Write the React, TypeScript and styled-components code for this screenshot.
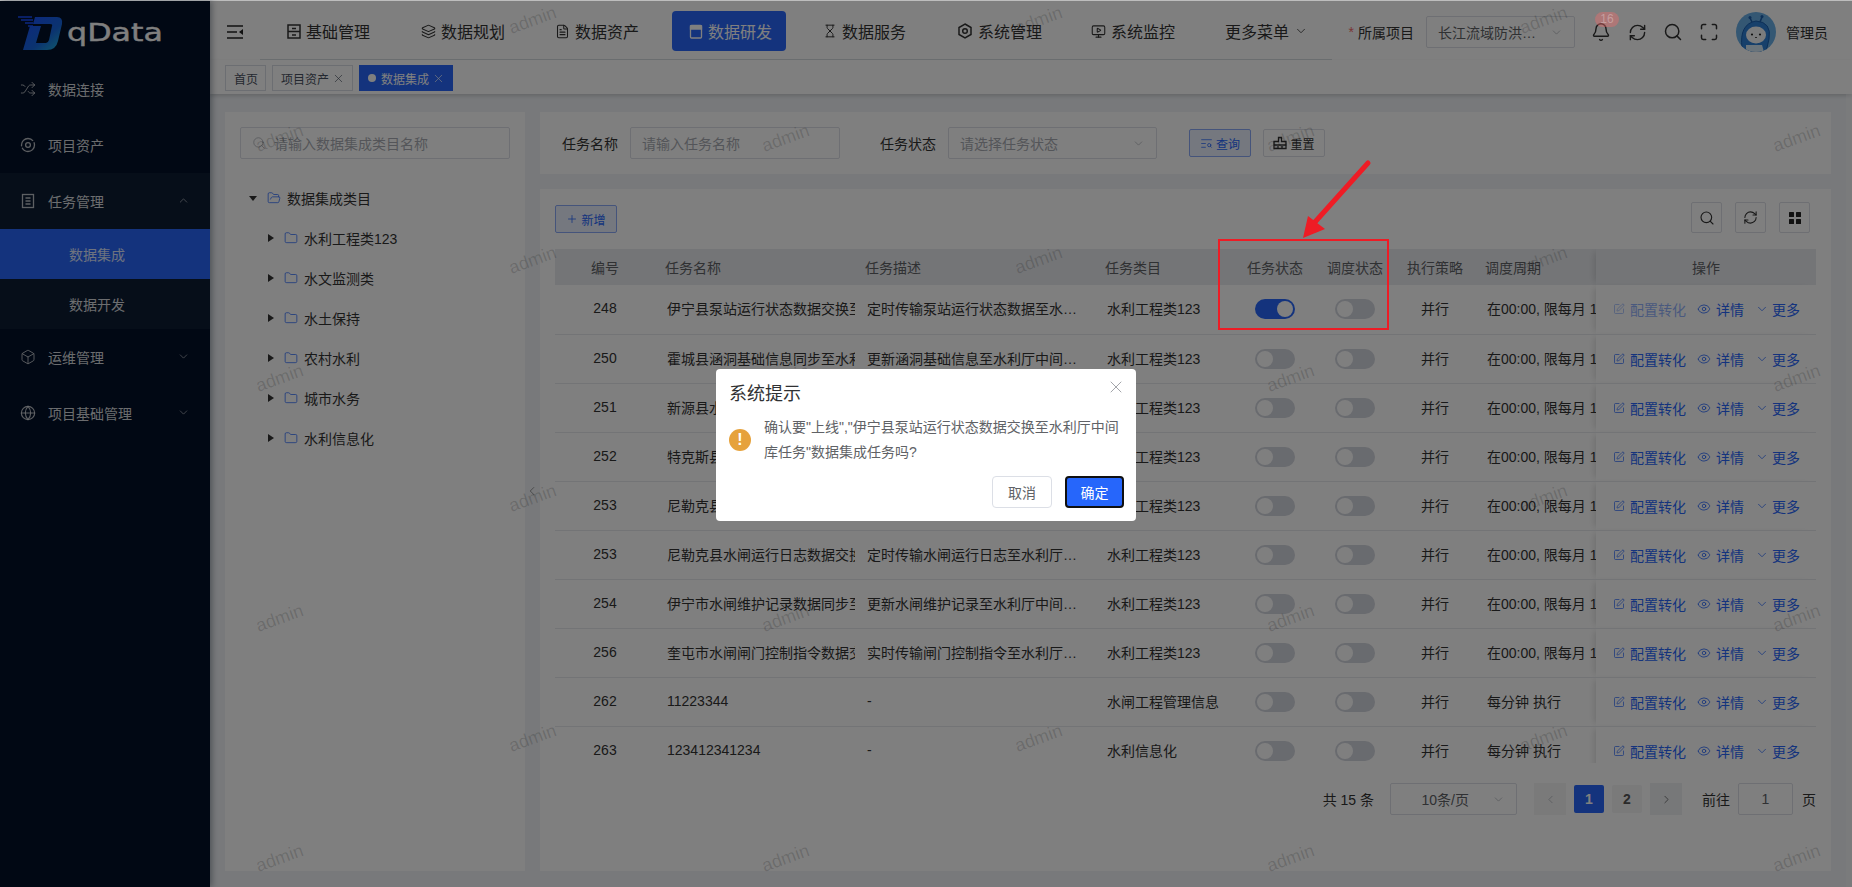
import { FC, ReactNode } from 'react';
import styled, { createGlobalStyle } from 'styled-components';
import {
  Bell,
  Box,
  ChevronDown,
  ChevronLeft,
  ChevronRight,
  ChevronUp,
  Eye,
  FileText,
  Folder,
  FolderOpen,
  Globe,
  Hourglass,
  Layers,
  Maximize,
  MonitorPlay,
  Plus,
  RefreshCw,
  Search,
  Shuffle,
  SquarePen,
  TextSearch,
  X,
} from 'lucide-react';

const BLUE = '#2867fb';

const GlobalStyle = createGlobalStyle`
  html, body {
    margin: 0;
    height: 100%;
    overflow: hidden;
    font-family: "Liberation Sans", "Noto Sans CJK SC", sans-serif;
    font-size: 14px;
    color: #333;
  }
  * { box-sizing: border-box; }
`;

const Shell = styled.div`
  position: relative;
  display: flex;
  height: 100vh;
  padding-top: 1px;
  background: #bdbdbd;
  overflow: hidden;
`;

/* ---------- sidebar ---------- */

const Sidebar = styled.aside`
  width: 210px;
  flex-shrink: 0;
  background: #021028;
  color: rgba(255, 255, 255, 0.85);
  box-shadow: 2px 0 6px rgba(0, 21, 41, 0.35);
  z-index: 1;
`;

const LogoRow = styled.div`
  height: 60px;
  display: flex;
  align-items: flex-start;
  padding: 14px 0 0 17px;
  gap: 4px;
`;

const LogoText = styled.span`
  display: inline-block;
  font-family: "DejaVu Sans", sans-serif;
  font-size: 25px;
  line-height: 36px;
  color: #fff;
  -webkit-text-stroke: 0.4px #fff;
  transform: scaleX(1.27);
  transform-origin: left center;
`;

const MenuItem = styled.div<{ $open?: boolean }>`
  height: 56px;
  display: flex;
  align-items: center;
  padding: 0 20px 1px 20px;
  gap: 12px;
  background: ${(p) => (p.$open ? '#0c1c33' : 'transparent')};
  svg { flex-shrink: 0; opacity: 0.85; }
  span { flex: 1; }
`;

const SubItem = styled.div<{ $active?: boolean }>`
  height: 50px;
  display: flex;
  align-items: center;
  padding: 0 0 1px 69px;
  background: ${(p) => (p.$active ? BLUE : '#0c1c33')};
`;

/* ---------- header ---------- */

const Main = styled.main`
  flex: 1;
  min-width: 0;
  display: flex;
  flex-direction: column;
  background: #f0f3f7;
`;

const Header = styled.header`
  height: 59px;
  flex-shrink: 0;
  display: flex;
  align-items: flex-start;
  padding: 0 24px 0 17px;
  background: #fff;
`;

const Collapse = styled.div`
  width: 16px;
  height: 14px;
  margin-top: 24px;
  margin-right: 17px;
  display: flex;
`;

const Nav = styled.nav`
  height: 59px;
  display: flex;
  gap: 20px;
  padding: 10px 10px 0;
  border-bottom: 1px solid #d9dfe2;
`;

const NavItem = styled.div<{ $active?: boolean }>`
  width: 114px;
  height: 40px;
  display: flex;
  align-items: center;
  padding-left: 17px;
  gap: 5px;
  font-size: 16px;
  border-radius: 4px;
  color: ${(p) => (p.$active ? '#fff' : '#333')};
  background: ${(p) => (p.$active ? BLUE : 'transparent')};
`;

const HeaderRight = styled.div`
  margin-left: auto;
  height: 59px;
  display: flex;
  align-items: center;
  padding-top: 3px;
`;

const Required = styled.span`
  color: #f56c6c;
  margin-right: 4px;
`;

const ProjectSelect = styled.div`
  width: 149px;
  height: 32px;
  margin: 0 8px 0 12px;
  padding: 0 11px;
  display: flex;
  align-items: center;
  justify-content: space-between;
  border: 1px solid #dcdfe6;
  border-radius: 2px;
  color: #606266;
`;

const HeaderIcon = styled.div`
  position: relative;
  width: 36px;
  display: flex;
  justify-content: center;
`;

const Badge = styled.span`
  position: absolute;
  top: -10px;
  left: 12px;
  width: 24px;
  height: 15px;
  border-radius: 8px;
  background: rgba(245, 108, 108, 0.4);
  color: rgba(255, 255, 255, 0.3);
  font-size: 12px;
  line-height: 15px;
  text-align: center;
  z-index: 11;
`;

const AvatarWrap = styled.div`
  width: 40px;
  height: 40px;
  margin: 0 10px 0 9px;
`;

const TagsBar = styled.div`
  height: 34px;
  flex-shrink: 0;
  display: flex;
  align-items: flex-start;
  gap: 6px;
  padding: 5px 0 0 15px;
  background: #fff;
  box-shadow: 0 2px 4px rgba(0, 0, 0, 0.16);
`;

const Tag = styled.div<{ $active?: boolean }>`
  height: 26px;
  display: flex;
  align-items: center;
  gap: 3px;
  padding: 0 7px 0 8px;
  font-size: 12px;
  border: 1px solid ${(p) => (p.$active ? BLUE : '#d8dce5')};
  background: ${(p) => (p.$active ? BLUE : '#fff')};
  color: ${(p) => (p.$active ? '#fff' : '#495060')};
`;

const Dot = styled.i`
  width: 8px;
  height: 8px;
  margin-right: 2px;
  border-radius: 50%;
  background: #fff;
`;

/* ---------- content ---------- */

const Content = styled.div`
  position: relative;
  flex: 1;
  min-height: 0;
  display: flex;
  gap: 15px;
  padding: 18px 21px 16px 15px;
  &::after {
    content: '';
    position: absolute;
    top: 0;
    right: 0;
    bottom: 0;
    width: 6px;
    background: rgba(255, 255, 255, 0.3);
  }
`;

const TreePanel = styled.section`
  position: relative;
  width: 300px;
  flex-shrink: 0;
  padding: 15px;
  background: #fff;
`;

const PanelToggle = styled.div`
  position: absolute;
  top: 372px;
  right: -14px;
  display: flex;
  color: #555;
`;

const TreeSearch = styled.div`
  height: 32px;
  display: flex;
  align-items: center;
  gap: 8px;
  padding-left: 11px;
  border: 1px solid #dcdfe6;
  border-radius: 2px;
  color: #a8abb2;
`;

const Tree = styled.div`
  margin-top: 19px;
`;

const TreeRow = styled.div<{ $level: number }>`
  height: 40px;
  display: flex;
  align-items: center;
  gap: 6px;
  padding-left: ${(p) => 9 + p.$level * 18}px;
  svg { color: ${BLUE}; flex-shrink: 0; }
`;

const Caret = styled.i<{ $open?: boolean }>`
  display: block;
  margin-right: 4px;
  border-style: solid;
  border-color: transparent;
  border-width: ${(p) => (p.$open ? '5px 4px 0' : '4px 0 4px 6px')};
  ${(p) => (p.$open ? 'border-top-color: #333;' : 'border-left-color: #333;')}
  ${(p) => (p.$open ? 'width: 8px; height: 5px;' : 'width: 6px; height: 8px; margin-left: 1px;')}
`;

const RightColumn = styled.div`
  flex: 1;
  min-width: 0;
  display: flex;
  flex-direction: column;
  gap: 15px;
`;

const QueryPanel = styled.section`
  height: 62px;
  flex-shrink: 0;
  display: flex;
  align-items: center;
  padding: 0 22px;
  background: #fff;
`;

const Label = styled.label`
  margin-right: 12px;
`;

const Field = styled.div<{ $width: number; $gap?: number }>`
  width: ${(p) => p.$width}px;
  height: 32px;
  margin-right: ${(p) => p.$gap ?? 0}px;
  display: flex;
  align-items: center;
  justify-content: space-between;
  padding: 0 11px;
  border: 1px solid #dcdfe6;
  border-radius: 2px;
  color: #a8abb2;
`;

const ActionButton = styled.button<{ $primary?: boolean; $gap?: number }>`
  height: 28px;
  width: 62px;
  margin-left: ${(p) => p.$gap ?? 0}px;
  padding: 0;
  display: flex;
  align-items: center;
  justify-content: center;
  gap: 3px;
  font: inherit;
  font-size: 12px;
  border-radius: 2px;
  border: 1px solid ${(p) => (p.$primary ? '#8aa9f7' : '#dcdfe6')};
  background: ${(p) => (p.$primary ? '#eaf0ff' : '#fff')};
  color: ${(p) => (p.$primary ? BLUE : '#333')};
`;

const TablePanel = styled.section`
  flex: 1;
  min-height: 0;
  display: flex;
  flex-direction: column;
  padding: 13px 15px 0;
  background: #fff;
`;

const Toolbar = styled.div`
  height: 31px;
  flex-shrink: 0;
  display: flex;
  align-items: flex-end;
  margin-right: 6px;
  margin-bottom: 16px;
`;

const ToolButtons = styled.div`
  margin-left: auto;
  display: flex;
  gap: 13px;
`;

const ToolButton = styled.div`
  width: 31px;
  height: 31px;
  display: flex;
  align-items: center;
  justify-content: center;
  border: 1px solid #dcdfe6;
  border-radius: 2px;
`;

const TableWrap = styled.div`
  height: 514px;
  flex-shrink: 0;
  overflow: hidden;
`;

const Table = styled.table`
  width: 1261px;
  table-layout: fixed;
  border-collapse: collapse;
`;

const Th = styled.th<{ $align?: string }>`
  height: 36px;
  padding: 0 10px;
  font-weight: 400;
  color: #606266;
  background: #e9ebef;
  white-space: nowrap;
  text-align: ${(p) => p.$align ?? 'left'};
`;

const Td = styled.td<{ $align?: string; $ellipsis?: boolean }>`
  height: 49px;
  padding: 0 10px 2px ${(p) => (p.$align ? 10 : 12)}px;
  white-space: nowrap;
  overflow: hidden;
  text-overflow: ${(p) => (p.$ellipsis ? 'ellipsis' : 'clip')};
  text-align: ${(p) => p.$align ?? 'left'};
  border-bottom: 1px solid #e6e8ec;
`;

const OpTh = styled(Th)`
  text-align: center;
  box-shadow: -5px 0 6px -3px rgba(0, 0, 0, 0.12);
`;

const OpTd = styled.td`
  padding: 0 0 0 17px;
  background: #fff;
  border-bottom: 1px solid #e6e8ec;
  box-shadow: -5px 0 6px -3px rgba(0, 0, 0, 0.12);
`;

const OpLinks = styled.div`
  display: flex;
  align-items: center;
  gap: 11px;
`;

const OpLink = styled.span<{ $muted?: boolean; $tight?: boolean }>`
  display: inline-flex;
  align-items: center;
  gap: ${(p) => (p.$tight ? 3 : 5)}px;
  color: ${BLUE};
  opacity: ${(p) => (p.$muted ? 0.5 : 1)};
`;

const Switch = styled.span<{ $on?: boolean }>`
  display: inline-flex;
  vertical-align: middle;
  justify-content: ${(p) => (p.$on ? 'flex-end' : 'flex-start')};
  width: 40px;
  height: 20px;
  margin-top: 2px;
  border-radius: 10px;
  padding: 2px;
  background: ${(p) => (p.$on ? BLUE : '#d3d6de')};
  &::after {
    content: '';
    width: 16px;
    height: 16px;
    border-radius: 50%;
    background: #fff;
  }
`;

const Pager = styled.div`
  height: 32px;
  margin-top: 20px;
  display: flex;
  align-items: center;
  justify-content: flex-end;
  color: #333;
`;

const PageSelect = styled.div`
  width: 127px;
  height: 32px;
  margin: 0 17px 0 16px;
  display: flex;
  align-items: center;
  justify-content: flex-end;
  gap: 23px;
  padding-right: 11px;
  border: 1px solid #dcdfe6;
  border-radius: 2px;
  color: #606266;
`;

const PageArrow = styled.div<{ $gap?: number; $dim?: boolean }>`
  width: 32px;
  height: 32px;
  margin-right: ${(p) => p.$gap ?? 0}px;
  display: flex;
  align-items: center;
  justify-content: center;
  background: ${(p) => (p.$dim ? '#f4f4f5' : '#eef0f3')};
  color: ${(p) => (p.$dim ? '#b0b3b8' : '#555')};
`;

const PageNum = styled.div<{ $active?: boolean }>`
  width: 30px;
  height: 28px;
  margin-right: 8px;
  display: flex;
  align-items: center;
  justify-content: center;
  border-radius: 2px;
  font-weight: 700;
  background: ${(p) => (p.$active ? BLUE : '#f4f4f5')};
  color: ${(p) => (p.$active ? '#fff' : '#555')};
`;

const GotoLabel = styled.span`
  margin-left: 20px;
`;

const GotoInput = styled.div`
  width: 55px;
  height: 32px;
  margin: 0 9px 0 8px;
  display: flex;
  align-items: center;
  justify-content: center;
  border: 1px solid #dcdfe6;
  border-radius: 2px;
  color: #606266;
`;

/* ---------- overlays ---------- */

const WatermarkLayer = styled.div`
  position: absolute;
  inset: 0;
  pointer-events: none;
  z-index: 5;
`;

const Mark = styled.span.attrs<{ $x: number; $y: number }>((p) => ({
  style: { left: p.$x - 25, top: p.$y - 11 },
}))<{ $x: number; $y: number }>`
  position: absolute;
  font-size: 18px;
  line-height: 22px;
  color: rgba(0, 0, 0, 0.16);
  transform: rotate(-20deg);
`;

const Mask = styled.div`
  position: absolute;
  inset: 1px 0 0;
  z-index: 10;
  display: flex;
  justify-content: center;
  align-items: flex-start;
  padding-top: 368px;
  background: rgba(0, 0, 0, 0.5);
`;

const Dialog = styled.div`
  position: relative;
  width: 420px;
  height: 152px;
  padding: 16px 12px 12px 13px;
  border-radius: 4px;
  background: #fff;
`;

const DialogTitle = styled.div`
  font-size: 18px;
  line-height: 18px;
  color: #303133;
`;

const DialogClose = styled.div`
  position: absolute;
  top: 8px;
  right: 10px;
  display: flex;
  color: #909399;
`;

const DialogBody = styled.div`
  display: flex;
  align-items: center;
  gap: 13px;
  margin-top: 12px;
  color: #606266;
  line-height: 25px;
`;

const WarnIcon = styled.span`
  width: 22px;
  height: 22px;
  flex-shrink: 0;
  border-radius: 50%;
  background: #e6a23c;
  color: #fff;
  font-weight: 700;
  font-size: 16px;
  line-height: 22px;
  text-align: center;
`;

const DialogFooter = styled.div`
  display: flex;
  justify-content: flex-end;
  gap: 13px;
  margin-top: 11px;
`;

const DialogButton = styled.button<{ $primary?: boolean }>`
  width: ${(p) => (p.$primary ? 59 : 60)}px;
  height: 32px;
  padding: 0;
  font: inherit;
  border-radius: 4px;
  border: ${(p) => (p.$primary ? '2px solid #101010' : '1px solid #dcdfe6')};
  background: ${(p) => (p.$primary ? '#2666fb' : '#fff')};
  color: ${(p) => (p.$primary ? '#fff' : '#606266')};
`;

const RedBox = styled.div`
  position: absolute;
  left: 1218px;
  top: 239px;
  width: 171px;
  height: 91px;
  border: 2px solid #ee1c25;
  z-index: 12;
`;

const RedArrow = styled.svg`
  position: absolute;
  left: 1295px;
  top: 155px;
  z-index: 12;
`;

/* ---------- drawings ---------- */

const LogoMark = () => (
  <svg width="46" height="36" viewBox="0 0 46 36">
    <defs>
      <linearGradient id="logoGrad" x1="0" y1="0" x2="1" y2="1">
        <stop offset="0" stopColor="#1a4dff" />
        <stop offset="0.6" stopColor="#1667e0" />
        <stop offset="1" stopColor="#22b8d8" />
      </linearGradient>
    </defs>
    <path d="M1 2h14M4 5h12M8 8h8M11 11h5" stroke="#1a4dff" strokeWidth="1.5" />
    <path
      fillRule="evenodd"
      fill="url(#logoGrad)"
      d="M18 2H40Q46 2 45 9L41 26Q39 35 30 35H6L13 11H24L19 28H29Q31 28 32 25L35 11Q36 9 33 9H16Z"
    />
  </svg>
);

const CollapseIcon = () => (
  <svg width="16" height="14" viewBox="0 0 16 14" fill="none" stroke="#222" strokeWidth="1.4">
    <path d="M0 1h16M0 7h10M0 13h16" />
    <path d="M16 4v6l-4-3z" fill="#222" stroke="none" />
  </svg>
);

const BaseIcon = () => (
  <svg width="14" height="15" viewBox="0 0 14 15" fill="none" stroke="#333" strokeWidth="1.5">
    <rect x="1" y="1" width="12" height="13" />
    <path d="M1 7.5h12M5 4.5h4M5 11h4" />
  </svg>
);

const StoreIcon = () => (
  <svg width="14" height="15" viewBox="0 0 14 15" fill="none" stroke="#fff" strokeWidth="1.3">
    <rect x="1.5" y="1.5" width="11" height="12.5" rx="1" />
    <path d="M1.5 2h11v3h-11z" fill="#fff" />
  </svg>
);

const HexIcon = () => (
  <svg width="16" height="16" viewBox="0 0 16 16" fill="none" stroke="#333" strokeWidth="1.5">
    <path d="M8 1l6 3.5v7L8 15l-6-3.5v-7z" />
    <circle cx="8" cy="8" r="2.3" />
  </svg>
);

const AssetIcon = () => (
  <svg width="16" height="16" viewBox="0 0 16 16" fill="none" stroke="currentColor" strokeWidth="1.3">
    <circle cx="8" cy="8" r="6.5" strokeDasharray="17 1.5" />
    <circle cx="8" cy="8" r="2.4" />
  </svg>
);

const TaskIcon = () => (
  <svg width="16" height="16" viewBox="0 0 16 16" fill="none" stroke="currentColor" strokeWidth="1.3">
    <rect x="2.5" y="1.5" width="11" height="13" />
    <path d="M5.5 5h5M5.5 8h5M5.5 11h5" />
  </svg>
);

const BrushIcon = () => (
  <svg width="14" height="14" viewBox="0 0 14 14" fill="none" stroke="#333" strokeWidth="1.3">
    <path d="M5.5 1.5h3v4h4.5v7H1v-7h4.5z" />
    <path d="M1 9h12M5 12.5V10M9 12.5V10" />
  </svg>
);

const GridIcon = () => (
  <svg width="12" height="12" viewBox="0 0 12 12" fill="#222">
    <rect width="5" height="5" rx="0.5" />
    <rect x="7" width="5" height="5" rx="0.5" />
    <rect y="7" width="5" height="5" rx="0.5" />
    <rect x="7" y="7" width="5" height="5" rx="0.5" />
  </svg>
);

const Avatar = () => (
  <svg width="40" height="40" viewBox="0 0 40 40">
    <clipPath id="avatarClip">
      <circle cx="20" cy="20" r="20" />
    </clipPath>
    <g clipPath="url(#avatarClip)">
      <rect width="40" height="40" fill="#69aee6" />
      <path d="M14 6l2 4M26 5l-2 5" stroke="#1b5fae" strokeWidth="1.6" />
      <circle cx="14" cy="5.5" r="1.5" fill="#1b5fae" />
      <circle cx="26" cy="4.5" r="1.5" fill="#1b5fae" />
      <path d="M6 36Q3 12 20 9Q36 10 33 27L30 40H6Z" fill="#2f80d6" stroke="#1b5fae" strokeWidth="1" />
      <ellipse cx="20" cy="23" rx="10" ry="8.5" fill="#f7f9fb" />
      <circle cx="16" cy="22.5" r="1.1" fill="#222" />
      <circle cx="24" cy="22.5" r="1.1" fill="#222" />
      <path d="M19 25.5h2" stroke="#222" strokeWidth="0.8" />
      <path d="M10 40V33H26L28 40Z" fill="#d5e8f6" />
    </g>
  </svg>
);

/* ---------- data ---------- */

const navItems: { label: string; icon: ReactNode; active?: boolean }[] = [
  { label: '基础管理', icon: <BaseIcon /> },
  { label: '数据规划', icon: <Layers size={15} strokeWidth={1.7} /> },
  { label: '数据资产', icon: <FileText size={15} strokeWidth={1.7} /> },
  { label: '数据研发', icon: <StoreIcon />, active: true },
  { label: '数据服务', icon: <Hourglass size={14} strokeWidth={1.7} /> },
  { label: '系统管理', icon: <HexIcon /> },
  { label: '系统监控', icon: <MonitorPlay size={15} strokeWidth={1.7} /> },
];

const treeChildren = ['水利工程类123', '水文监测类', '水土保持', '农村水利', '城市水务', '水利信息化'];

const rows = [
  ['248', '伊宁县泵站运行状态数据交换至水利厅中间库任务', '定时传输泵站运行状态数据至水利厅中间库', '水利工程类123', '在00:00, 限每月 1日 执行'],
  ['250', '霍城县涵洞基础信息同步至水利厅中间库任务', '更新涵洞基础信息至水利厅中间库系统', '水利工程类123', '在00:00, 限每月 1日 执行'],
  ['251', '新源县水闸基础信息同步至水利厅中间库', '更新水闸基础信息至水利厅中间库系统', '水利工程类123', '在00:00, 限每月 1日 执行'],
  ['252', '特克斯县水闸运行数据交换至水利厅中间库', '定时传输水闸运行数据至水利厅中间库', '水利工程类123', '在00:00, 限每月 1日 执行'],
  ['253', '尼勒克县水闸运行数据交换至水利厅中间库', '定时传输水闸运行数据至水利厅中间库', '水利工程类123', '在00:00, 限每月 1日 执行'],
  ['253', '尼勒克县水闸运行日志数据交换至水利厅', '定时传输水闸运行日志至水利厅中间库', '水利工程类123', '在00:00, 限每月 1日 执行'],
  ['254', '伊宁市水闸维护记录数据同步至水利厅', '更新水闸维护记录至水利厅中间库系统', '水利工程类123', '在00:00, 限每月 1日 执行'],
  ['256', '奎屯市水闸闸门控制指令数据交换至水利厅', '实时传输闸门控制指令至水利厅中间库', '水利工程类123', '在00:00, 限每月 1日 执行'],
  ['262', '11223344', '-', '水闸工程管理信息', '每分钟 执行'],
  ['263', '123412341234', '-', '水利信息化', '每分钟 执行'],
];

const columnWidths = [100, 200, 240, 140, 80, 80, 80, 121, 220];

const marks: [number, number][] = [];
[20, 138, 260, 378, 498, 618, 738, 858].forEach((y, i) => {
  (i % 2 === 0 ? [533, 1039, 1544] : [280, 786, 1291, 1797]).forEach((x) => marks.push([x, y]));
});

const App: FC = () => (
  <>
    <GlobalStyle />
    <Shell>
      <Sidebar>
        <LogoRow>
          <LogoMark />
          <LogoText>qData</LogoText>
        </LogoRow>
        <MenuItem>
          <Shuffle size={16} strokeWidth={1.4} />
          <span>数据连接</span>
        </MenuItem>
        <MenuItem>
          <AssetIcon />
          <span>项目资产</span>
        </MenuItem>
        <MenuItem $open>
          <TaskIcon />
          <span>任务管理</span>
          <ChevronUp size={13} strokeWidth={1.3} />
        </MenuItem>
        <SubItem $active>数据集成</SubItem>
        <SubItem>数据开发</SubItem>
        <MenuItem>
          <Box size={16} strokeWidth={1.4} />
          <span>运维管理</span>
          <ChevronDown size={13} strokeWidth={1.3} />
        </MenuItem>
        <MenuItem>
          <Globe size={16} strokeWidth={1.7} />
          <span>项目基础管理</span>
          <ChevronDown size={13} strokeWidth={1.3} />
        </MenuItem>
      </Sidebar>

      <Main>
        <Header>
          <Collapse>
            <CollapseIcon />
          </Collapse>
          <Nav>
            {navItems.map((n) => (
              <NavItem key={n.label} $active={n.active}>
                {n.icon}
                {n.label}
              </NavItem>
            ))}
            <NavItem>
              更多菜单
              <ChevronDown size={14} strokeWidth={1.4} />
            </NavItem>
          </Nav>
          <HeaderRight>
            <Required>*</Required>
            所属项目
            <ProjectSelect>
              长江流域防洪…
              <ChevronDown size={13} strokeWidth={1.3} color="#a8abb2" />
            </ProjectSelect>
            <HeaderIcon>
              <Bell size={20} strokeWidth={1.7} />
              <Badge>16</Badge>
            </HeaderIcon>
            <HeaderIcon>
              <RefreshCw size={19} strokeWidth={1.8} />
            </HeaderIcon>
            <HeaderIcon>
              <Search size={20} strokeWidth={1.8} />
            </HeaderIcon>
            <HeaderIcon>
              <Maximize size={20} strokeWidth={1.8} />
            </HeaderIcon>
            <AvatarWrap>
              <Avatar />
            </AvatarWrap>
            管理员
          </HeaderRight>
        </Header>

        <TagsBar>
          <Tag>首页</Tag>
          <Tag>
            项目资产
            <X size={13} strokeWidth={1.2} />
          </Tag>
          <Tag $active>
            <Dot />
            数据集成
            <X size={13} strokeWidth={1.2} />
          </Tag>
        </TagsBar>

        <Content>
          <TreePanel>
            <TreeSearch>
              <Search size={14} strokeWidth={1.3} />
              请输入数据集成类目名称
            </TreeSearch>
            <Tree>
              <TreeRow $level={0}>
                <Caret $open />
                <FolderOpen size={14} strokeWidth={1.3} />
                数据集成类目
              </TreeRow>
              {treeChildren.map((c) => (
                <TreeRow key={c} $level={1}>
                  <Caret />
                  <Folder size={14} strokeWidth={1.3} />
                  {c}
                </TreeRow>
              ))}
            </Tree>
            <PanelToggle>
              <ChevronLeft size={14} strokeWidth={1} />
            </PanelToggle>
          </TreePanel>

          <RightColumn>
            <QueryPanel>
              <Label>任务名称</Label>
              <Field $width={210} $gap={40}>请输入任务名称</Field>
              <Label>任务状态</Label>
              <Field $width={209}>
                请选择任务状态
                <ChevronDown size={13} strokeWidth={1.3} />
              </Field>
              <ActionButton $primary $gap={32}>
                <TextSearch size={13} strokeWidth={1.4} />
                查询
              </ActionButton>
              <ActionButton $gap={12}>
                <BrushIcon />
                重置
              </ActionButton>
            </QueryPanel>

            <TablePanel>
              <Toolbar>
                <ActionButton $primary>
                  <Plus size={12} strokeWidth={1.6} />
                  新增
                </ActionButton>
                <ToolButtons>
                  <ToolButton>
                    <Search size={16} strokeWidth={1.7} />
                  </ToolButton>
                  <ToolButton>
                    <RefreshCw size={15} strokeWidth={1.7} />
                  </ToolButton>
                  <ToolButton>
                    <GridIcon />
                  </ToolButton>
                </ToolButtons>
              </Toolbar>

              <TableWrap>
                <Table>
                  <colgroup>
                    {columnWidths.map((w, i) => (
                      <col key={i} width={w} />
                    ))}
                  </colgroup>
                  <thead>
                    <tr>
                      <Th $align="center">编号</Th>
                      <Th>任务名称</Th>
                      <Th>任务描述</Th>
                      <Th>任务类目</Th>
                      <Th $align="center">任务状态</Th>
                      <Th $align="center">调度状态</Th>
                      <Th $align="center">执行策略</Th>
                      <Th>调度周期</Th>
                      <OpTh>操作</OpTh>
                    </tr>
                  </thead>
                  <tbody>
                    {rows.map((r, i) => (
                      <tr key={i}>
                        <Td $align="center">{r[0]}</Td>
                        <Td>{r[1]}</Td>
                        <Td $ellipsis>{r[2]}</Td>
                        <Td>{r[3]}</Td>
                        <Td $align="center">
                          <Switch $on={i === 0} />
                        </Td>
                        <Td $align="center">
                          <Switch />
                        </Td>
                        <Td $align="center">并行</Td>
                        <Td>{r[4]}</Td>
                        <OpTd>
                          <OpLinks>
                            <OpLink $muted={i === 0}>
                              <SquarePen size={12} strokeWidth={1.4} />
                              配置转化
                            </OpLink>
                            <OpLink>
                              <Eye size={14} strokeWidth={1.4} />
                              详情
                            </OpLink>
                            <OpLink $tight>
                              <ChevronDown size={14} strokeWidth={1.3} />
                              更多
                            </OpLink>
                          </OpLinks>
                        </OpTd>
                      </tr>
                    ))}
                  </tbody>
                </Table>
              </TableWrap>

              <Pager>
                共 15 条
                <PageSelect>
                  10条/页
                  <ChevronDown size={13} strokeWidth={1.3} color="#a8abb2" />
                </PageSelect>
                <PageArrow $gap={8} $dim>
                  <ChevronLeft size={13} strokeWidth={1.4} />
                </PageArrow>
                <PageNum $active>1</PageNum>
                <PageNum>2</PageNum>
                <PageArrow>
                  <ChevronRight size={13} strokeWidth={1.4} />
                </PageArrow>
                <GotoLabel>前往</GotoLabel>
                <GotoInput>1</GotoInput>
                页
              </Pager>
            </TablePanel>
          </RightColumn>
        </Content>
      </Main>

      <WatermarkLayer>
        {marks.map(([x, y]) => (
          <Mark key={`${x}-${y}`} $x={x} $y={y}>
            admin
          </Mark>
        ))}
      </WatermarkLayer>

      <Mask>
        <Dialog>
          <DialogTitle>系统提示</DialogTitle>
          <DialogClose>
            <X size={20} strokeWidth={1} />
          </DialogClose>
          <DialogBody>
            <WarnIcon>!</WarnIcon>
            <div>确认要"上线","伊宁县泵站运行状态数据交换至水利厅中间库任务"数据集成任务吗?</div>
          </DialogBody>
          <DialogFooter>
            <DialogButton>取消</DialogButton>
            <DialogButton $primary>确定</DialogButton>
          </DialogFooter>
        </Dialog>
      </Mask>

      <RedBox />
      <RedArrow width="80" height="90" viewBox="0 0 80 90">
        <path d="M73 8L20 67" stroke="#ee1c25" strokeWidth="5" strokeLinecap="round" fill="none" />
        <path d="M8 83L13 61L30 74Z" fill="#ee1c25" />
      </RedArrow>
    </Shell>
  </>
);

export default App;
